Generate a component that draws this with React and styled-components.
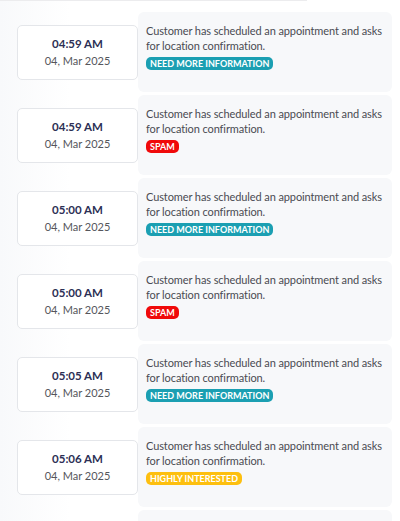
import React from 'react';
import styled, { createGlobalStyle } from 'styled-components';

const GlobalStyle = createGlobalStyle`
  body {
    margin: 0;
    background: #ffffff;
  }
`;

const items = [
  { time: '04:59 AM', date: '04, Mar 2025', tag: 'NEED MORE INFORMATION', tone: 'info' },
  { time: '04:59 AM', date: '04, Mar 2025', tag: 'SPAM', tone: 'spam' },
  { time: '05:00 AM', date: '04, Mar 2025', tag: 'NEED MORE INFORMATION', tone: 'info' },
  { time: '05:00 AM', date: '04, Mar 2025', tag: 'SPAM', tone: 'spam' },
  { time: '05:05 AM', date: '04, Mar 2025', tag: 'NEED MORE INFORMATION', tone: 'info' },
  { time: '05:06 AM', date: '04, Mar 2025', tag: 'HIGHLY INTERESTED', tone: 'hot' },
];

const tones = {
  info: '#1b9fb2',
  spam: '#f00a0a',
  hot: '#fdbf0f',
};

function App() {
  return (
    <Page>
      <GlobalStyle />
      <TopRule />
      <List>
        {items.map((item, i) => (
          <Row key={i}>
            <TimeCell>
              <TimeCard>
                <Time>{item.time}</Time>
                <DateText>{item.date}</DateText>
              </TimeCard>
            </TimeCell>
            <Panel>
              <Message>Customer has scheduled an appointment and asks for location confirmation.</Message>
              <Badge $tone={item.tone}>{item.tag}</Badge>
            </Panel>
          </Row>
        ))}
        <Row>
          <TimeCell />
          <Panel />
        </Row>
      </List>
    </Page>
  );
}

export default App;

const Page = styled.div`
  font-family: 'Lato', 'Open Sans', sans-serif;
  height: 521px;
  overflow: hidden;
  background: linear-gradient(90deg, #f8f9fb 0px, #ffffff 70px);
`;

const TopRule = styled.div`
  width: 307px;
  height: 1px;
  background: #ececee;
`;

const List = styled.div`
  display: flex;
  flex-direction: column;
  gap: 3px;
  padding: 11px 8px 0 0;
`;

const Row = styled.div`
  display: grid;
  grid-template-columns: 138px 1fr;
  height: 80px;
  flex-shrink: 0;
`;

const TimeCell = styled.div`
  display: flex;
  align-items: center;
  padding-left: 17px;
`;

const TimeCard = styled.div`
  box-sizing: border-box;
  width: 121px;
  height: 55px;
  background: #ffffff;
  border: 1px solid #e4e6ea;
  border-radius: 5px;
  display: flex;
  flex-direction: column;
  align-items: center;
  justify-content: center;
  gap: 3px;
`;

const Time = styled.div`
  font-size: 11.5px;
  font-weight: 700;
  color: #2c2f55;
  line-height: 14px;
`;

const DateText = styled.div`
  font-size: 11px;
  color: #55565c;
  line-height: 14px;
`;

const Panel = styled.div`
  background: #f7f8fa;
  border-radius: 6px;
  padding: 12px 4px 0 8px;
`;

const Message = styled.div`
  font-size: 11px;
  letter-spacing: -0.1px;
  line-height: 14.5px;
  color: #4a4b52;
`;

const Badge = styled.div`
  width: fit-content;
  margin-top: 4px;
  padding: 0 4px;
  height: 13px;
  line-height: 13px;
  border-radius: 5px;
  font-size: 9px;
  font-weight: 700;
  color: #ffffff;
  background: ${(p) => tones[p.$tone]};
`;
